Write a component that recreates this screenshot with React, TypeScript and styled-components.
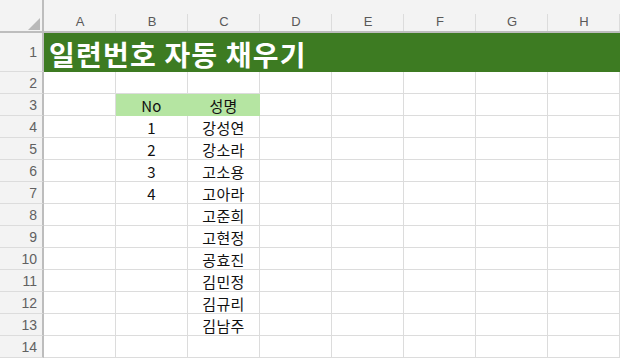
import React from "react";
import styled, { createGlobalStyle } from "styled-components";

const Global = createGlobalStyle`
  html, body { margin: 0; padding: 0; background: #ffffff; }
  body { font-family: "Noto Sans CJK KR", "Noto Sans", sans-serif; }
`;

const HEADER_BG = "#f3f3f3";
const HEADER_LINE = "#bdbdbd";
const GRID = "#dcdcdc";

const Sheet = styled.div`
  display: grid;
  grid-template-columns: 44px repeat(8, 72px);
  grid-template-rows: 33px 39px repeat(13, 22px);
  width: 620px;
  height: 358px;
  overflow: hidden;
`;

const Corner = styled.div`
  position: relative;
  background: ${HEADER_BG};
  border-right: 2px solid ${HEADER_LINE};
  border-bottom: 2px solid ${HEADER_LINE};
  box-sizing: border-box;
  &::after {
    content: "";
    position: absolute;
    right: 2px;
    bottom: 1px;
    width: 0;
    height: 0;
    border-style: solid;
    border-width: 0 0 12px 12px;
    border-color: transparent transparent #b9b9b9 transparent;
  }
`;

const ColHeader = styled.div`
  position: relative;
  background: ${HEADER_BG};
  border-bottom: 2px solid ${HEADER_LINE};
  box-sizing: border-box;
  display: flex;
  align-items: flex-end;
  justify-content: center;
  padding-bottom: 1px;
  font-family: "Liberation Sans", "Noto Sans", sans-serif;
  font-size: 13px;
  line-height: 16px;
  color: #595959;
  &::after {
    content: "";
    position: absolute;
    right: 0;
    top: 14px;
    bottom: 0;
    width: 1px;
    background: ${GRID};
  }
`;

const RowHeader = styled.div`
  background: ${HEADER_BG};
  border-right: 2px solid ${HEADER_LINE};
  border-bottom: 1px solid ${GRID};
  box-sizing: border-box;
  display: flex;
  align-items: center;
  justify-content: flex-end;
  padding-right: 5px;
  font-family: "Liberation Sans", "Noto Sans", sans-serif;
  font-size: 14px;
  color: #616161;
`;

const TitleCell = styled.div`
  grid-column: 2 / -1;
  background: #3d7b22;
  color: #ffffff;
  display: flex;
  align-items: center;
  padding-left: 5px;
  padding-top: 2px;
  box-sizing: border-box;
  font-family: "Noto Sans CJK KR", sans-serif;
  font-weight: 700;
  font-size: 28px;
  letter-spacing: 1.2px;
  white-space: nowrap;
`;

const Cell = styled.div<{ $fill?: string }>`
  background: ${(p) => p.$fill ?? "#ffffff"};
  border-right: 1px solid ${(p) => p.$fill ?? GRID};
  border-bottom: 1px solid ${(p) => (p.$fill ? "transparent" : GRID)};
  box-sizing: border-box;
  display: flex;
  align-items: center;
  justify-content: center;
  font-family: "Noto Sans CJK KR", sans-serif;
  font-size: 15px;
  letter-spacing: 0.3px;
  color: #111111;
  line-height: 1;
  padding-top: 1px;
`;

const COLS = ["A", "B", "C", "D", "E", "F", "G", "H"];
const HEAD_FILL = "#b5e5a2";

const names = [
  "강성연",
  "강소라",
  "고소용",
  "고아라",
  "고준희",
  "고현정",
  "공효진",
  "김민정",
  "김규리",
  "김남주",
];

function rowValues(r: number): (string | { text: string; fill: string })[] {
  const vals: (string | { text: string; fill: string })[] = Array(8).fill("");
  if (r === 3) {
    vals[1] = { text: "No", fill: HEAD_FILL };
    vals[2] = { text: "성명", fill: HEAD_FILL };
  } else if (r >= 4 && r <= 13) {
    const i = r - 4;
    if (i < 4) vals[1] = String(i + 1);
    vals[2] = names[i];
  }
  return vals;
}

export default function App() {
  const rows = Array.from({ length: 13 }, (_, i) => i + 2);
  return (
    <>
      <Global />
      <Sheet>
        <Corner />
        {COLS.map((c) => (
          <ColHeader key={c}>{c}</ColHeader>
        ))}
        <RowHeader>1</RowHeader>
        <TitleCell>일련번호 자동 채우기</TitleCell>
        {rows.map((r) => (
          <React.Fragment key={r}>
            <RowHeader>{r}</RowHeader>
            {rowValues(r).map((v, ci) =>
              typeof v === "string" ? (
                <Cell key={ci}>{v}</Cell>
              ) : (
                <Cell key={ci} $fill={v.fill}>
                  {v.text}
                </Cell>
              )
            )}
          </React.Fragment>
        ))}
      </Sheet>
    </>
  );
}
